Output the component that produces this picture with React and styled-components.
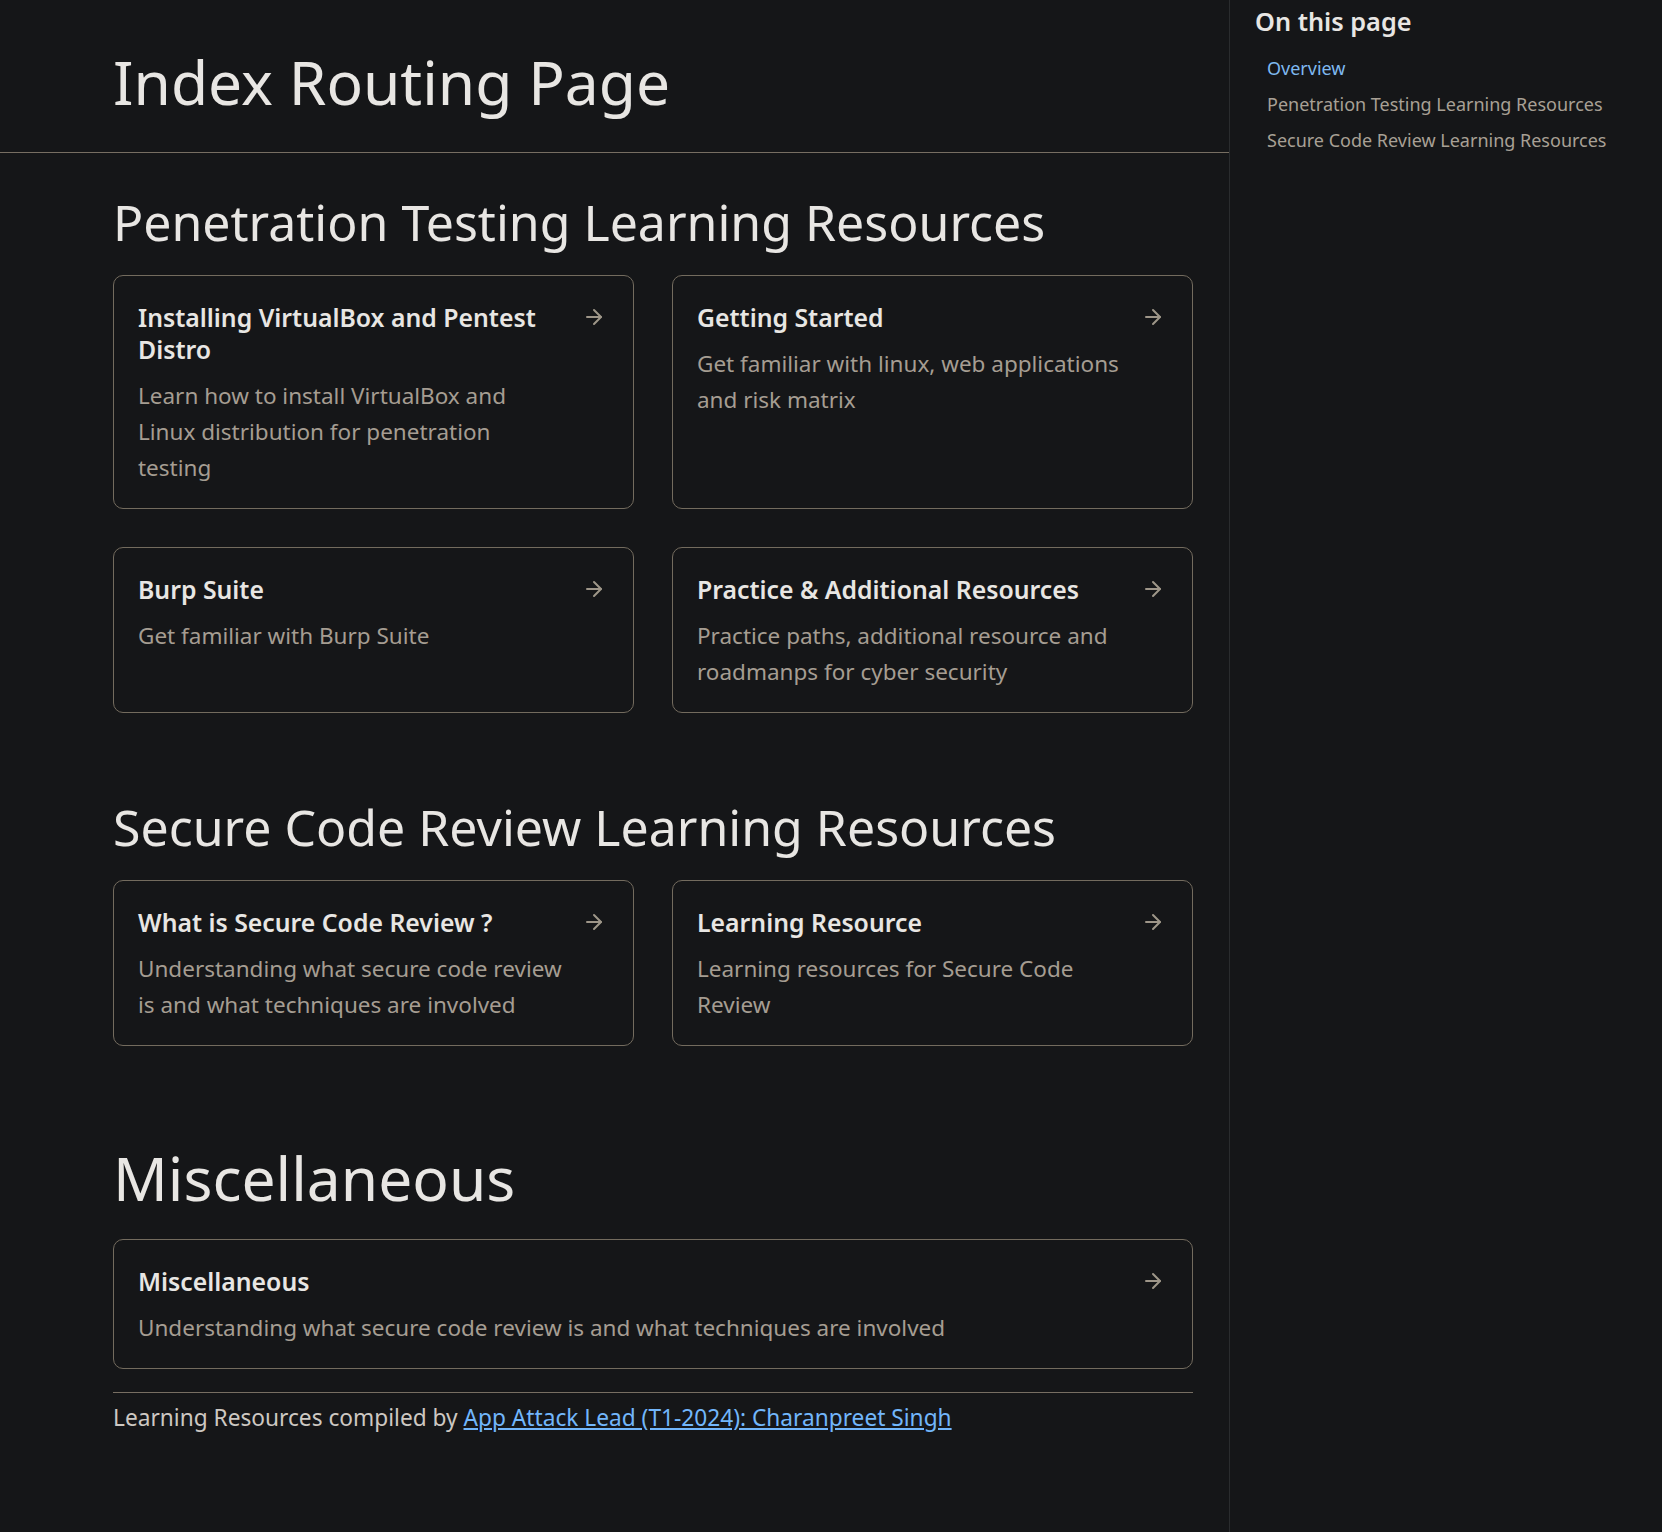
import styled, { createGlobalStyle } from 'styled-components';
import { ArrowRight } from 'lucide-react';

const GlobalStyle = createGlobalStyle`
  body {
    margin: 0;
    background-color: #151618;
    font-family: "Noto Sans", "Open Sans", sans-serif;
    color: #e8e6e3;
  }
`

const Layout = styled.div`
  display: flex;
  min-height: 1532px;
`

const Main = styled.main`
  width: 1230px;
  flex-shrink: 0;
  box-sizing: border-box;
  border-right: 1px solid #2a2c2e;
  padding-bottom: 80px;
`

const Header = styled.header`
  padding: 43px 0 32px 113px;
  border-bottom: 1px solid #776e62;
`

const PageTitle = styled.h1`
  margin: 0;
  font-size: 60.5px;
  font-weight: 400;
  line-height: 77px;
  color: #e8e6e3;
`

const Content = styled.div`
  padding: 0 36px 0 113px;
`

const SectionTitle = styled.h2`
  margin: ${p => p.$top}px 0 ${p => p.$bottom || 23}px;
  font-size: ${p => p.$size}px;
  font-weight: 400;
  line-height: 1.2;
  color: #e8e6e3;
`

const CardGrid = styled.div`
  display: grid;
  grid-template-columns: repeat(${p => p.$cols}, 1fr);
  gap: 38px;
`

const Card = styled.a`
  display: flex;
  align-items: flex-start;
  gap: 19px;
  padding: 25px 27px 22px 24px;
  border: 1px solid #736b5e;
  border-radius: 10px;
  text-decoration: none;
  color: inherit;
`

const CardText = styled.div`
  flex: 1;
  min-width: 0;
`

const CardTitle = styled.h3`
  margin: 0 0 13px;
  font-size: 24.8px;
  font-weight: 600;
  line-height: 32px;
  color: #e8e6e3;
`

const CardDesc = styled.p`
  margin: 0;
  font-size: 22.5px;
  line-height: 36px;
  color: #a59d92;
`

const Arrow = styled(ArrowRight)`
  flex-shrink: 0;
  margin-top: 4px;
  color: #9e9689;
`

const Footer = styled.footer`
  margin-top: 23px;
  padding-top: 7px;
  border-top: 1px solid #776e62;
  font-size: 22.7px;
  line-height: 36px;
  color: #cdc8c2;
`

const FooterLink = styled.a`
  color: #72b6fb;
  text-decoration: underline;
`

const Sidebar = styled.aside`
  flex: 1;
  padding: 6px 24px 0 25px;
`

const SidebarTitle = styled.h4`
  margin: 0 0 14px;
  font-size: 25.3px;
  font-weight: 600;
  line-height: 1.2;
  color: #e8e6e3;
`

const TocList = styled.ul`
  list-style: none;
  margin: 0;
  padding: 0 0 0 12px;
`

const TocLink = styled.a`
  display: block;
  font-size: 18px;
  line-height: 36px;
  text-decoration: none;
  color: ${p => (p.$active ? '#7fb9f0' : '#a8a095')};
`

const pentest = [
  {
    title: 'Installing VirtualBox and Pentest Distro',
    desc: 'Learn how to install VirtualBox and Linux distribution for penetration testing',
  },
  {
    title: 'Getting Started',
    desc: 'Get familiar with linux, web applications and risk matrix',
  },
  { title: 'Burp Suite', desc: 'Get familiar with Burp Suite' },
  {
    title: 'Practice & Additional Resources',
    desc: 'Practice paths, additional resource and roadmanps for cyber security',
  },
]

const codeReview = [
  {
    title: 'What is Secure Code Review ?',
    desc: 'Understanding what secure code review is and what techniques are involved',
  },
  {
    title: 'Learning Resource',
    desc: 'Learning resources for Secure Code Review',
  },
]

const misc = [
  {
    title: 'Miscellaneous',
    desc: 'Understanding what secure code review is and what techniques are involved',
  },
]

function ResourceCard({ title, desc }) {
  return (
    <Card href="#">
      <CardText>
        <CardTitle>{title}</CardTitle>
        <CardDesc>{desc}</CardDesc>
      </CardText>
      <Arrow size={24} strokeWidth={2} />
    </Card>
  )
}

export default function App() {
  return (
    <>
      <GlobalStyle />
      <Layout>
        <Main>
          <Header>
            <PageTitle>Index Routing Page</PageTitle>
          </Header>
          <Content>
            <SectionTitle $size={50} $top={39}>Penetration Testing Learning Resources</SectionTitle>
            <CardGrid $cols={2}>
              {pentest.map(c => <ResourceCard key={c.title} {...c} />)}
            </CardGrid>

            <SectionTitle $size={50} $top={84}>Secure Code Review Learning Resources</SectionTitle>
            <CardGrid $cols={2}>
              {codeReview.map(c => <ResourceCard key={c.title} {...c} />)}
            </CardGrid>

            <SectionTitle $size={60.5} $top={96} $bottom={24}>Miscellaneous</SectionTitle>
            <CardGrid $cols={1}>
              {misc.map(c => <ResourceCard key={c.title} {...c} />)}
            </CardGrid>

            <Footer>
              Learning Resources compiled by{' '}
              <FooterLink href="#">App Attack Lead (T1-2024): Charanpreet Singh</FooterLink>
            </Footer>
          </Content>
        </Main>

        <Sidebar>
          <SidebarTitle>On this page</SidebarTitle>
          <TocList>
            <li><TocLink href="#" $active>Overview</TocLink></li>
            <li><TocLink href="#">Penetration Testing Learning Resources</TocLink></li>
            <li><TocLink href="#">Secure Code Review Learning Resources</TocLink></li>
          </TocList>
        </Sidebar>
      </Layout>
    </>
  )
}
